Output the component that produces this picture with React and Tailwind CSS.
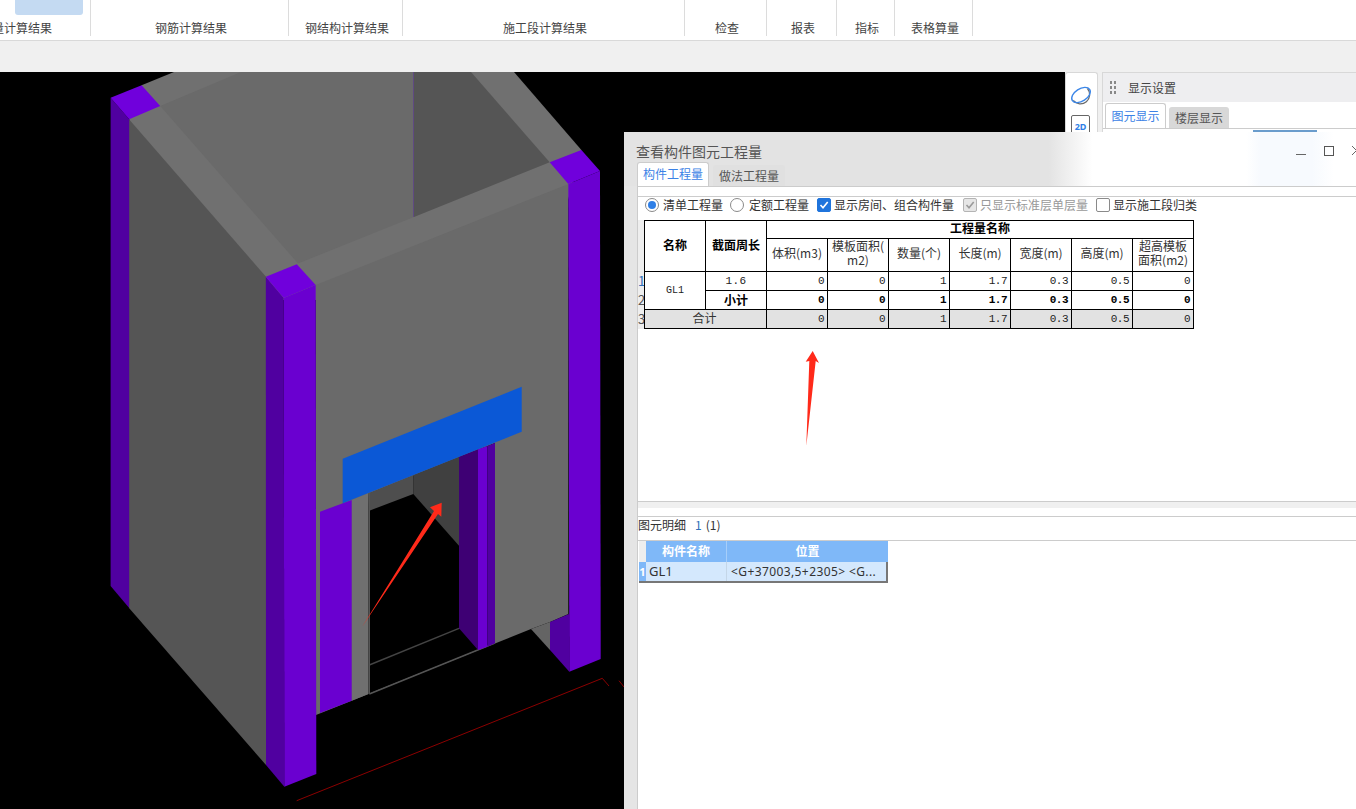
import React from "react";

const cjk = "font-['Noto_Sans_CJK_SC','Noto_Sans',sans-serif]";

const ribbon = [
  { w: "w-[91px]", label: "计算结果", clip: true },
  { w: "w-[198px]", label: "钢筋计算结果" },
  { w: "w-[114px]", label: "钢结构计算结果" },
  { w: "w-[282px]", label: "施工段计算结果" },
  { w: "w-[82px]", label: "检查" },
  { w: "w-[70px]", label: "报表" },
  { w: "w-[58px]", label: "指标" },
  { w: "w-[78px]", label: "表格算量" },
];

function Scene() {
  const P = ({ c, p }) => <polygon fill={c} points={p} />;
  const bright = "#6a00d0";
  const top = "#7000dc";
  const dark = "#5000a0";
  const deep = "#3e0074";
  const wall = "#6a6a6a";
  const beam = "#707070";
  const side = "#555555";
  return (
    <svg width="1065" height="737" viewBox="0 72 1065 737" className="block shrink-0">
      <rect x="0" y="72" width="1065" height="737" fill="#000" />
      {/* one base under the top faces so no seams show; it runs on under the walls */}
      <P c={beam} p="135,135 129.2,119.3 141.6,85.3 174,72 514,72 581.4,150 568,200 316,300 266,300" />
      {/* back and inside */}
      <P c={wall} p="160.2,106 241,72 414,72 414,217 298,263.5" />
      <P c={side} p="414,72 471,72 549.7,162.3 414,217" />
      <line x1="413.5" y1="72" x2="413.5" y2="217" stroke="#5a3c8c" strokeWidth="0.7" />
      {/* left column and side wall */}
      <P c={side} p="129,119.3 266,276.7 266,765 129,608" />
      <P c={dark} p="110.6,97.7 129.2,119.3 129.2,608 110.6,586" />
      <P c={top} p="110.6,97.7 141.6,85.3 160.2,106 129.2,119.3" />
      {/* front wall */}
      <P c={wall} p="315.7,285 568.3,184 568.3,614 550,622 531,629 316,715" />
      {/* door opening */}
      <P c="#000" p="368,494 495,443 495,643 368,694" />
      <P c="#4e4e4e" p="368.3,493.3 413.3,475 413.3,494 369.3,510.7" />
      <P c="#404040" p="413.3,475 459,456.7 459,545.7 413.3,494" />
      <line x1="369.3" y1="665" x2="459" y2="628.3" stroke="#444" strokeWidth="1.4" />
      <line x1="369.3" y1="694" x2="495" y2="643" stroke="#555" strokeWidth="1.4" />
      <P c={beam} p="351.7,500 368.3,493.3 368.3,694 351.7,700.7" />
      <P c={side} p="368.3,493.3 370,492.6 370,693.3 368.3,694" />
      <P c={bright} p="320,511.7 351.7,500 351.7,700.7 320,713" />
      <P c={deep} p="459,456.7 478,449.3 478,650 459,628.3" />
      <P c={bright} p="478,449.3 487.3,446 487.3,646.7 478,650" />
      <P c={dark} p="487.3,446 495,443 495,643.3 487.3,646.7" />
      <P c="#0b58d6" p="342.7,458.7 521.7,386.7 521.7,431.7 342.7,503.3" />
      {/* front columns */}
      <P c={dark} p="265.8,276.7 283.7,298 284.3,786.7 266,765" />
      <P c={bright} p="283.7,298 315.7,285 316.3,774 284.3,786.7" />
      <P c={top} p="265.8,276.7 296.8,264.3 315.7,285 283.7,298" />
      <P c={bright} p="568.3,184 600,171 600.7,659 569.3,671.7" />
      <P c={top} p="549.7,162.3 581.4,150 600,171 568.3,184" />
      <P c="#646464" p="531,629 550,622 550,650" />
      <P c={dark} p="550,622 569,614 569.3,671.7 550,650" />
      {/* axis */}
      <polyline points="296.7,800.7 602.3,678.3 609,686" fill="none" stroke="#8b0000" strokeWidth="1" />
      <line x1="619" y1="680.7" x2="624" y2="687" stroke="#8b0000" strokeWidth="1" />
      {/* arrow */}
      <polygon fill="#ff2a1a" points="362,627 434,511 430,507.3 441.7,502.7 441.3,516.7 438,514" />
    </svg>
  );
}

function Radio({ on }) {
  return (
    <span className="w-[14px] h-[14px] rounded-full border border-[#8a8a8a] bg-white flex items-center justify-center shrink-0">
      {on && <span className="w-[8px] h-[8px] rounded-full bg-[#2f7fe6]" />}
    </span>
  );
}

function Check({ on, disabled }) {
  const box = disabled
    ? "bg-[#e6e6e6] border-[#b4b4b4]"
    : on
      ? "bg-[#1f74dc] border-[#1f74dc]"
      : "bg-white border-[#8a8a8a]";
  return (
    <span className={`w-[14px] h-[14px] rounded-[2px] border flex items-center justify-center shrink-0 ${box}`}>
      {on && (
        <svg width="10" height="10" viewBox="0 0 10 10">
          <path d="M1.5 5 L4 7.8 L8.7 2" fill="none" stroke={disabled ? "#9a9a9a" : "#fff"} strokeWidth="1.6" />
        </svg>
      )}
    </span>
  );
}

const tdBase = "border border-black font-['Liberation_Mono',monospace] text-[11px] tracking-[-0.5px] text-right pr-[3px] leading-none text-[#222]";
const thCell = "border border-black text-[12px] font-normal leading-[14px] text-[#333] text-center p-0 pb-[4px]";
const thBold = "border border-black text-[12px] font-bold text-black p-0 pb-[3px]";

function QuantityTable() {
  const Row = ({ cells, bold, gray }) =>
    cells.map((c, i) => (
      <td key={i} className={`${tdBase} ${bold ? "font-bold text-black" : ""} ${gray ? "bg-[#e2e2e2]" : ""}`}>{c}</td>
    ));
  const a = ["0", "0", "1", "1.7", "0.3", "0.5", "0"];
  return (
    <table className="border-collapse table-fixed w-[549px] border border-black">
      <colgroup>
        <col className="w-[61px]" />
        <col className="w-[61px]" />
        <col className="w-[61px]" />
        <col className="w-[61px]" />
        <col className="w-[61px]" />
        <col className="w-[61px]" />
        <col className="w-[61px]" />
        <col className="w-[61px]" />
        <col className="w-[61px]" />
      </colgroup>
      <tbody>
        <tr className="h-[18px]">
          <th rowSpan={2} className={thBold}>名称</th>
          <th rowSpan={2} className={thBold}>截面周长</th>
          <th colSpan={7} className={`${thBold} leading-none`}>工程量名称</th>
        </tr>
        <tr className="h-[33px]">
          <th className={thCell}>体积(m3)</th>
          <th className={thCell}>模板面积(<br />m2)</th>
          <th className={thCell}>数量(个)</th>
          <th className={thCell}>长度(m)</th>
          <th className={thCell}>宽度(m)</th>
          <th className={thCell}>高度(m)</th>
          <th className={thCell}>超高模板<br />面积(m2)</th>
        </tr>
        <tr className="h-[19px]">
          <td rowSpan={2} className="border border-black text-center font-['Liberation_Mono',monospace] text-[10px] text-[#222]">GL1</td>
          <td className="border border-black text-center font-['Liberation_Mono',monospace] text-[11px] tracking-[0.4px] leading-none text-[#222]">1.6</td>
          <Row cells={a} />
        </tr>
        <tr className="h-[19px]">
          <td className="border border-black text-center text-[12px] font-bold text-black leading-none">小计</td>
          <Row cells={a} bold />
        </tr>
        <tr className="h-[19px]">
          <td colSpan={2} className="border border-black text-center text-[12px] text-[#333] bg-[#e2e2e2] leading-none pb-[2px] pr-[2px]">合计</td>
          <Row cells={a} gray />
        </tr>
      </tbody>
    </table>
  );
}

function Dialog() {
  return (
    <div className={`absolute left-[624px] top-[132px] right-0 bottom-0 bg-[#e5e5e5] flex flex-col overflow-hidden ${cjk}`}>
      {/* title */}
      <div className="h-[54px] shrink-0 relative bg-[linear-gradient(90deg,#e3e3e3_0%,#e3e3e3_58%,#ffffff_64%,#ffffff_85%,#f7fafe_87%,#f7fafe_94%,#ffffff_97%)] flex flex-col">
        <div className="relative pl-[12px] pt-[9px] h-[30px] text-[14px] leading-[20px] text-[#555]">查看构件图元工程量</div>
        <div className="relative flex items-end pl-[13px] h-[24px] gap-[4px]">
          <div className="w-[72px] h-[24px] bg-white border border-b-0 border-[#cccccc] rounded-t-[3px] text-[12px] leading-[22px] text-center text-[#3b82e6]">构件工程量</div>
          <div className="w-[72px] h-[21px] bg-[#e0e0e0] rounded-t-[3px] text-[12px] leading-[21px] text-center text-[#555]">做法工程量</div>
        </div>
        <div className="absolute left-[672px] top-[22px] w-[10px] h-px bg-[#666]" />
        <div className="absolute left-[700px] top-[14px] w-[10px] h-[10px] border border-[#555]" />
        <svg className="absolute left-[727px] top-[13px]" width="11" height="11" viewBox="0 0 11 11">
          <path d="M1 1 L10 10 M10 1 L1 10" stroke="#666" strokeWidth="1" />
        </svg>
      </div>
      {/* body */}
      <div className="ml-[13px] flex-1 bg-white border-l border-t border-[#cccccc] flex flex-col min-h-0">
        <div className="h-[10px] shrink-0 border-b border-[#cccccc]" />
        <div className="h-[23px] shrink-0 flex items-start pt-[1px] pl-[7px] text-[12px] text-[#333] leading-[14px]">
          <Radio on />
          <span className="ml-[4px] w-[67px]">清单工程量</span>
          <Radio />
          <span className="ml-[5px] w-[68px]">定额工程量</span>
          <Check on />
          <span className="ml-[3px] w-[129px]">显示房间、组合构件量</span>
          <Check on disabled />
          <span className="ml-[3px] w-[116px] text-[#999]">只显示标准层单层量</span>
          <Check />
          <span className="ml-[3px]">显示施工段归类</span>
        </div>
        {/* upper grid */}
        <div className="h-[282px] shrink-0 flex items-start border-b border-[#cccccc]">
          <div className="w-[6px] h-[109px] bg-[#eeeeee] shrink-0 flex flex-col text-[13px] leading-[19px] text-[#555] overflow-hidden">
            <div className="h-[51px] shrink-0" />
            <div className="h-[19px] text-[#2f6fb8]">1</div>
            <div className="h-[19px]">2</div>
            <div className="h-[19px]">3</div>
          </div>
          <QuantityTable />
        </div>
        <div className="h-[6px] shrink-0 bg-[#f0f0f0]" />
        <div className="h-[9px] shrink-0 border-b border-[#cccccc]" />
        <div className="h-[24px] shrink-0 border-b border-[#cccccc] flex items-center pb-[7px] text-[12px] text-[#333] leading-none">
          <span>图元明细</span>
          <span className="ml-[9px] text-[#2f6fb8]">1</span>
          <span className="ml-[4px]">(1)</span>
        </div>
        {/* lower grid */}
        <div className="ml-[1px] w-[249px] border-b-2 border-[#777777]">
          <div className="flex h-[21px] text-[12px] font-bold text-white leading-[20px] text-center">
            <div className="w-[7px] bg-[#eeeeee]" />
            <div className="w-[81px] bg-[#7fb8f8] border-r border-[#a6cefa]">构件名称</div>
            <div className="flex-1 bg-[#7fb8f8]">位置</div>
          </div>
          <div className="flex h-[19px] text-[12px] leading-[19px] text-[#333] bg-[#d4e8fd] border-r-2 border-[#777777] font-['Noto_Sans',sans-serif]">
            <div className="w-[7px] bg-[#7fb8f8] text-white font-bold text-center text-[11px]">1</div>
            <div className="w-[81px] pl-[3px] border-r border-[#c4d6e8] text-[13px]">GL1</div>
            <div className="flex-1 pl-[4px] whitespace-nowrap overflow-hidden tracking-[0.4px]">{"<G+37003,5+2305> <G..."}</div>
          </div>
        </div>
      </div>
    </div>
  );
}

function SidePanels() {
  return (
    <div className={`flex-1 flex bg-[#f0f0f0] ${cjk}`}>
      <div className="w-[33px] bg-white border border-b-0 border-[#d8d8d8] rounded-t-[3px] flex flex-col items-center pt-[11px] shrink-0">
        <svg width="22" height="22" viewBox="0 0 22 22" className="-ml-[2px]">
          <path d="M3.2 16.5 A8.6 8.6 0 1 0 17.5 4.5" fill="none" stroke="#6b6b6b" strokeWidth="1.3" />
          <ellipse cx="11" cy="11" rx="10.3" ry="6.2" transform="rotate(-33 11 11)" fill="none" stroke="#3b86e8" strokeWidth="1.4" />
        </svg>
        <div className="mt-[9px] mr-[2px] w-[19px] h-[24px] border border-[#666] rounded-t-[2px] text-[9px] font-bold text-[#2f7fe6] text-center pt-[6px] leading-none font-['Noto_Sans',sans-serif]">2D</div>
      </div>
      <div className="ml-[4px] flex-1 bg-white border-t border-l border-[#d8d8d8] flex flex-col">
        <div className="h-[29px] bg-[#eeeef0] flex items-center pl-[7px]">
          <div className="grid grid-cols-2 gap-x-[2px] gap-y-[2px] w-[6px]">
            {[0, 1, 2, 3, 4, 5].map((i) => (
              <span key={i} className="w-[2px] h-[3px] bg-[#888]" />
            ))}
          </div>
          <span className="ml-[12px] text-[12px] text-[#444]">显示设置</span>
        </div>
        <div className="h-[27px] flex items-end pl-[2px] gap-[3px] border-b border-[#cccccc]">
          <div className="w-[61px] h-[25px] border border-b-0 border-[#cccccc] rounded-t-[3px] text-[12px] leading-[23px] text-center text-[#3b82e6] bg-white">图元显示</div>
          <div className="w-[60px] h-[21px] rounded-t-[3px] bg-[#d8d8d8] text-[12px] leading-[21px] text-center text-[#555]">楼层显示</div>
        </div>
        <div className="ml-[150px] mt-px w-[64px] h-[2px] bg-[#6a9ccc]" />
      </div>
    </div>
  );
}

export default function App() {
  return (
    <div className={`relative w-[1356px] h-[809px] overflow-hidden bg-[#f0f0f0] flex flex-col ${cjk}`}>
      <div className="h-[41px] shrink-0 bg-white border-b-[1.5px] border-[#d9d9d9] flex items-start">
        {ribbon.map((r, i) => (
          <div key={i} className={`${r.w} h-[36px] shrink-0 border-r border-[#dcdcdc] relative overflow-hidden`}>
            {i === 0 && <div className="absolute left-[15px] top-0 w-[68px] h-[15px] bg-[#c4daf2] rounded-b-[3px]" />}
            {r.clip ? (
              <div className="absolute right-[38px] top-[20px] text-[12px] leading-[16px] text-[#444] whitespace-nowrap">量计算结果</div>
            ) : (
              <div className="absolute inset-x-0 pl-[3px] top-[20px] text-[12px] leading-[16px] text-[#444] text-center whitespace-nowrap">{r.label}</div>
            )}
          </div>
        ))}
      </div>
      <div className="h-[31px] shrink-0 bg-[#f0f0f0]" />
      <div className="flex-1 flex min-h-0">
        <Scene />
        <SidePanels />
      </div>
      <Dialog />
      <svg className="absolute left-[790px] top-[340px]" width="40" height="110" viewBox="790 340 40 110">
        <polygon fill="#ff2a1a" points="806.3,446 809.3,361 805.7,361.7 812.7,351 819,363 815.7,361" />
      </svg>
    </div>
  );
}
